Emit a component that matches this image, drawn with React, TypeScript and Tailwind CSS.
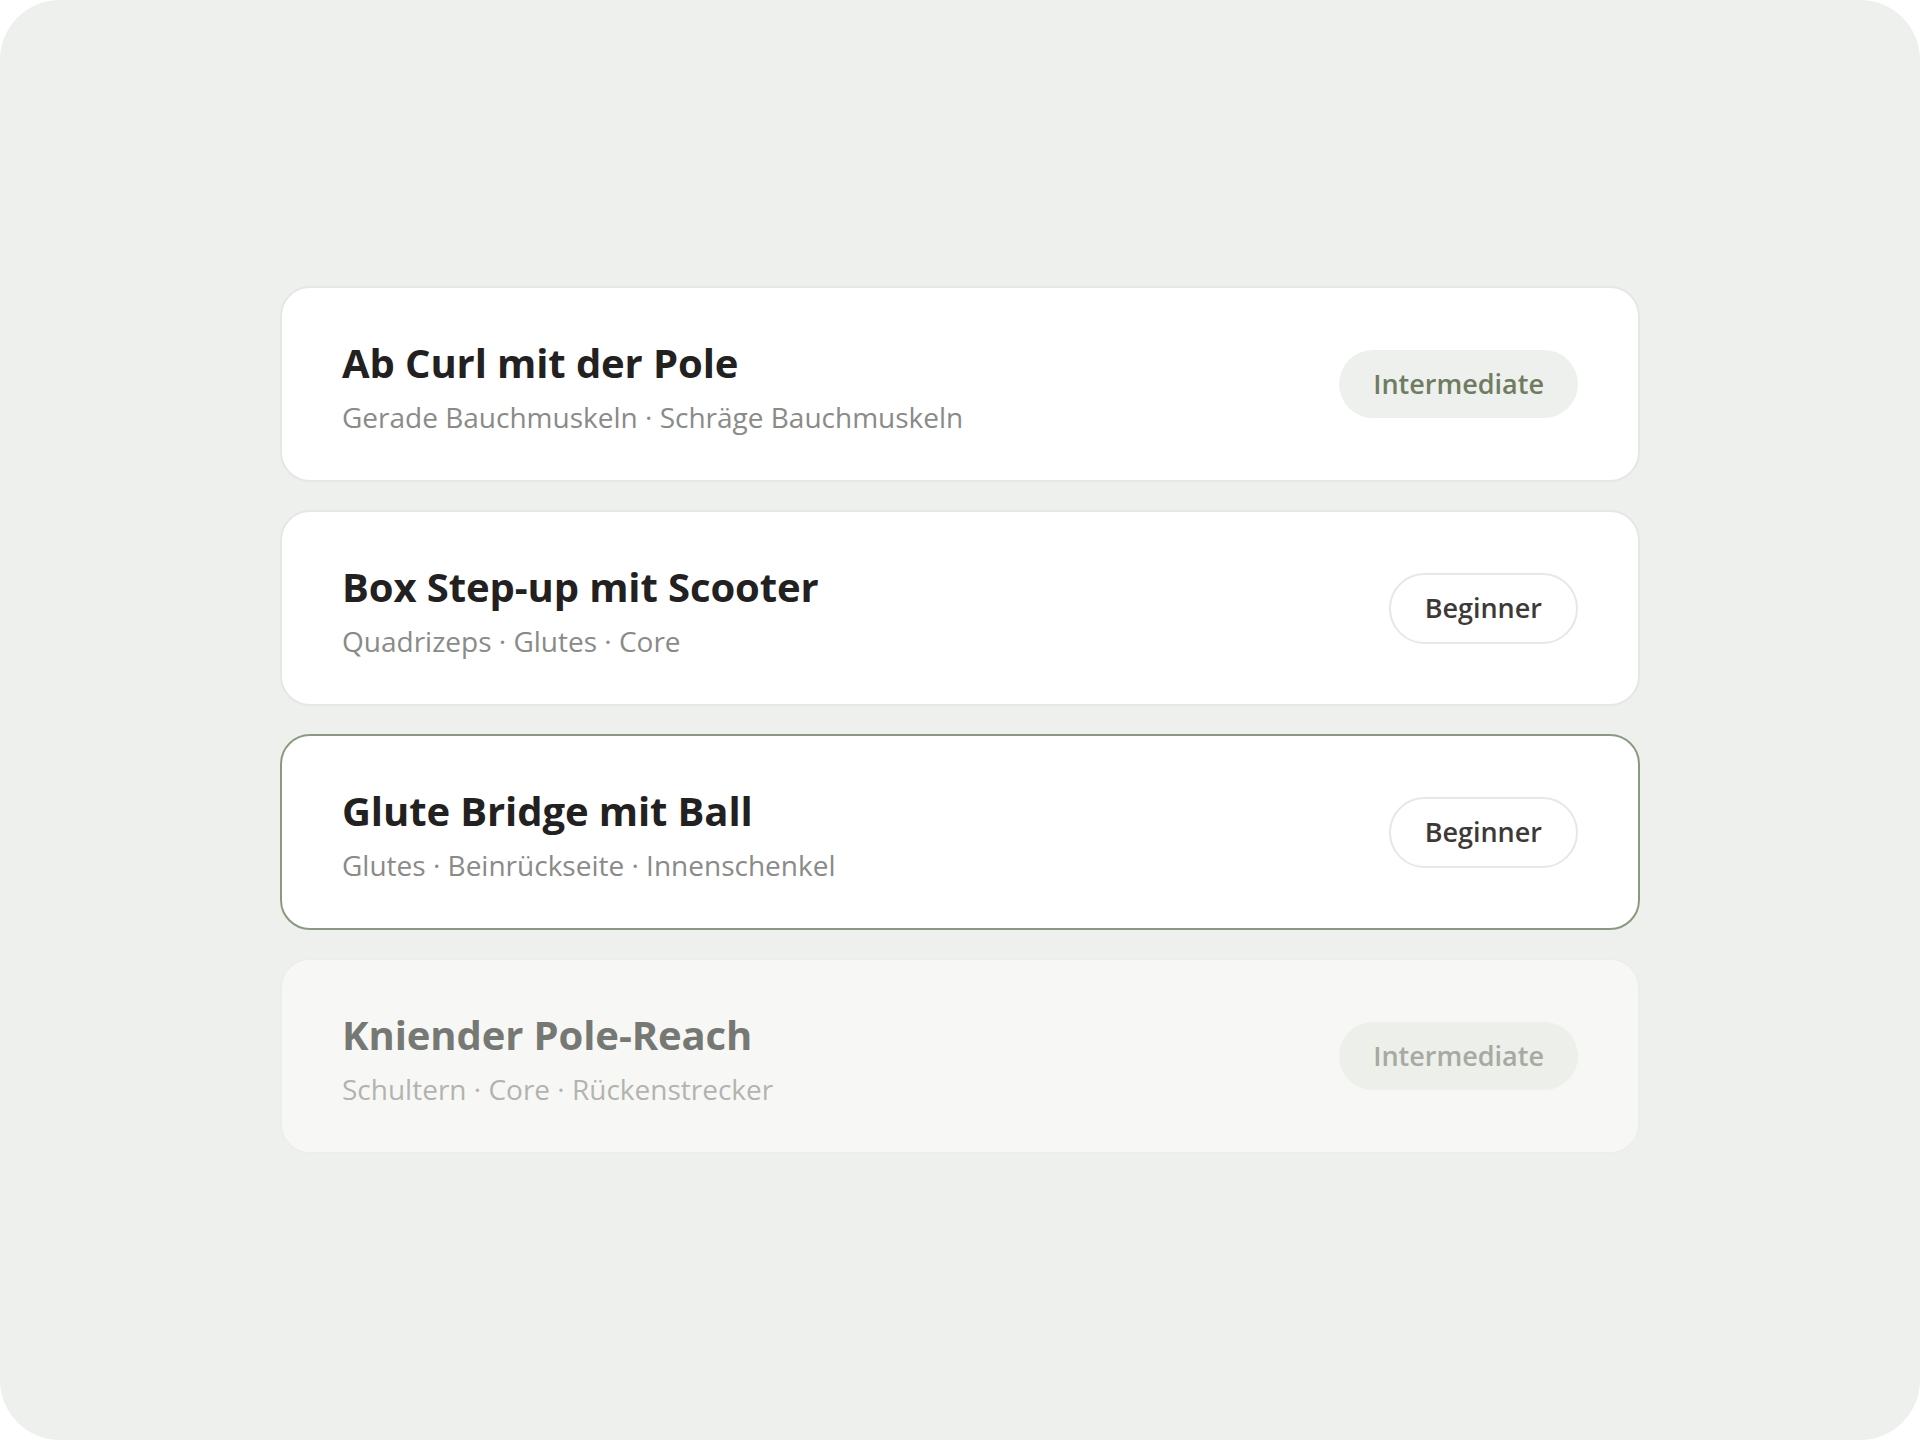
import React from "react";

type Item = {
  title: string;
  muscles: string[];
  level: "Beginner" | "Intermediate";
  state: "normal" | "selected" | "disabled";
};

const items: Item[] = [
  { title: "Ab Curl mit der Pole", muscles: ["Gerade Bauchmuskeln", "Schräge Bauchmuskeln"], level: "Intermediate", state: "normal" },
  { title: "Box Step-up mit Scooter", muscles: ["Quadrizeps", "Glutes", "Core"], level: "Beginner", state: "normal" },
  { title: "Glute Bridge mit Ball", muscles: ["Glutes", "Beinrückseite", "Innenschenkel"], level: "Beginner", state: "selected" },
  { title: "Kniender Pole-Reach", muscles: ["Schultern", "Core", "Rückenstrecker"], level: "Intermediate", state: "disabled" },
];

function Badge({ level, disabled }: { level: Item["level"]; disabled: boolean }) {
  if (level === "Intermediate") {
    return (
      <span
        className={
          "inline-flex h-[68px] items-center rounded-full px-[34px] text-[27px] font-semibold " +
          (disabled ? "bg-[#edefeb] text-[#a6aaa0]" : "bg-[#eef0ed] text-[#6f7c62]")
        }
      >
        Intermediate
      </span>
    );
  }
  return (
    <span className="inline-flex h-[71px] items-center rounded-full border-2 border-[#e6e8e4] bg-white px-[34px] text-[27px] font-semibold text-[#3e3937]">
      Beginner
    </span>
  );
}

function Card({ item }: { item: Item }) {
  const disabled = item.state === "disabled";
  const selected = item.state === "selected";
  const cardCls = selected
    ? "border-[#8b9a7f] bg-white"
    : disabled
    ? "border-[#eceeea] bg-[#f7f8f6]"
    : "border-[#e5e7e3] bg-white";
  return (
    <div className={"flex h-[196px] items-center justify-between rounded-[30px] border-2 pl-[60px] pr-[60px] " + cardCls}>
      <div className="flex flex-col pt-[5px]">
        <div
          className={
            "text-[40px] font-bold leading-[48px] tracking-[-0.1px] " +
            (disabled ? "text-[#767873]" : "text-[#23211f]")
          }
        >
          {item.title}
        </div>
        <div
          className={
            "mt-[12px] text-[28px] leading-[36px] " + (disabled ? "text-[#b2b4ae]" : "text-[#8a8a88]")
          }
        >
          {item.muscles.join(" · ")}
        </div>
      </div>
      <Badge level={item.level} disabled={disabled} />
    </div>
  );
}

export default function App() {
  return (
    <div className="h-[1440px] w-full bg-white" style={{ fontFamily: '"Open Sans", "Noto Sans", sans-serif' }}>
      <div className="flex h-full w-full items-center justify-center rounded-[60px] bg-[#eef0ed]">
        <div className="flex w-[1360px] flex-col gap-[28px]">
          {items.map((it) => (
            <Card key={it.title} item={it} />
          ))}
        </div>
      </div>
    </div>
  );
}
